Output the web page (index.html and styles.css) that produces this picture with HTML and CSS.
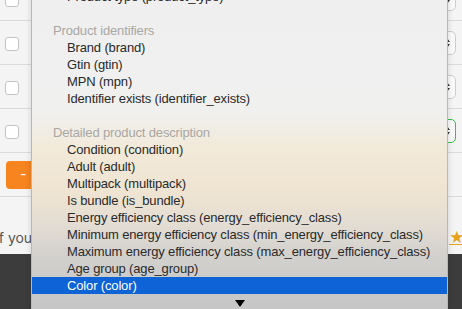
FILE: index.html
```html
<!DOCTYPE html>
<html lang="en">
<head>
  <meta charset="UTF-8">
  <meta name="viewport" content="width=device-width, initial-scale=1.0">
  <title>Feed attributes</title>
  <link rel="stylesheet" href="styles.css">
</head>
<body>
  <div class="page">
    <!-- Attribute mapping rows -->
    <div class="rows">
      <div class="row">
        <span class="check"></span>
        <span class="select"><span class="arrows"></span></span>
      </div>
      <div class="row">
        <span class="check"></span>
        <span class="select"><span class="arrows"></span></span>
      </div>
      <div class="row">
        <span class="check"></span>
        <span class="select"><span class="arrows"></span></span>
      </div>
      <div class="row">
        <span class="check"></span>
        <span class="select focused"><span class="arrows"></span></span>
      </div>
    </div>

    <div class="actions">
      <button class="btn-remove">- Delete</button>
    </div>

    <p class="note">
      <span class="note-text">If you like it</span>
      <a class="star" href="#">★&nbsp;</a>
    </p>

    <div class="footer"></div>
  </div>

  <!-- Open attribute dropdown -->
  <ul class="menu">
    <li class="item">Product type (product_type)</li>
    <li class="sep"></li>
    <li class="group">Product identifiers</li>
    <li class="item">Brand (brand)</li>
    <li class="item">Gtin (gtin)</li>
    <li class="item">MPN (mpn)</li>
    <li class="item">Identifier exists (identifier_exists)</li>
    <li class="sep"></li>
    <li class="group">Detailed product description</li>
    <li class="item">Condition (condition)</li>
    <li class="item">Adult (adult)</li>
    <li class="item">Multipack (multipack)</li>
    <li class="item">Is bundle (is_bundle)</li>
    <li class="item">Energy efficiency class (energy_efficiency_class)</li>
    <li class="item">Minimum energy efficiency class (min_energy_efficiency_class)</li>
    <li class="item">Maximum energy efficiency class (max_energy_efficiency_class)</li>
    <li class="item">Age group (age_group)</li>
    <li class="item active">Color (color)</li>
    <li class="scroll"><span class="down"></span></li>
  </ul>
</body>
</html>
```

FILE: styles.css
```css
body {
  margin: 0;
  overflow: hidden;
  font-family: Inter, "Noto Sans", sans-serif;
  background-color: #3b3b3b;
}
.page {
  display: flex;
  flex-direction: column;
  height: 309px;
  overflow: hidden;
  background-color: #f4f4f4;
}
.rows {
  margin-top: -23px;
}
.row {
  display: flex;
  align-items: center;
  justify-content: space-between;
  height: 43px;
  padding: 0 6px 0 5px;
  border-bottom: 1px solid #dadada;
}
.check {
  width: 14px;
  height: 14px;
  margin-top: 3px;
  box-sizing: border-box;
  border: 1px solid #c4c4c4;
  border-radius: 3px;
  background-color: #fff;
}
.select {
  display: flex;
  align-items: center;
  justify-content: flex-end;
  width: 180px;
  height: 24px;
  margin-top: 1px;
  padding-right: 5px;
  box-sizing: border-box;
  border: 1px solid #cdcdcd;
  border-radius: 5px;
  background-color: #fafafa;
}
.select.focused {
  border-color: #35c250;
}
.arrows {
  width: 0;
  height: 10px;
  border-left: 3px solid transparent;
  border-right: 3px solid transparent;
  position: relative;
}
.arrows::before,
.arrows::after {
  content: "";
  position: absolute;
  left: -3px;
  border-left: 3px solid transparent;
  border-right: 3px solid transparent;
}
.arrows::before {
  top: 0;
  border-bottom: 4px solid #333;
}
.arrows::after {
  bottom: 0;
  border-top: 4px solid #333;
}
.actions {
  display: flex;
  align-items: center;
  height: 43px;
  padding-left: 6px;
  border-bottom: 1px solid #dadada;
}
.btn-remove {
  height: 28px;
  padding: 0 14px;
  border: none;
  border-radius: 4px;
  background-color: #f6841f;
  color: #fff;
  font-family: inherit;
  font-size: 14px;
}
.note {
  display: flex;
  align-items: center;
  gap: 2px;
  height: 57px;
  margin: 0;
  padding-top: 24px;
  box-sizing: border-box;
  overflow: hidden;
  font-size: 14px;
  color: #555;
}
.note-text {
  flex: 0 0 452px;
  margin-left: -5px;
  white-space: nowrap;
}
.star {
  color: #e6a21b;
  font-size: 15px;
  white-space: nowrap;
}
.footer {
  flex: 1;
  background-color: #3c3c3c;
}

/* dropdown list */
.menu {
  position: absolute;
  top: -12px;
  left: 31px;
  width: 417px;
  margin: 0;
  padding: 0;
  list-style: none;
  box-sizing: border-box;
  border-left: 1px solid #b8b8b8;
  border-right: 1px solid #b8b8b8;
  box-shadow: 0 0 6px rgba(0, 0, 0, 0.15);
  background: linear-gradient(to bottom, #efefef 0px, #f0f0ef 125px, #f2e9d8 162px, #efe4d2 205px, #e4ddd3 235px, #d3d1ce 267px, #c6c6c6 315px);
  font-family: "Liberation Sans", Arial, sans-serif;
  font-size: 13px;
  letter-spacing: -0.15px;
  color: #2a2a2a;
}
.menu li {
  height: 17px;
  line-height: 17px;
  white-space: nowrap;
}
.item {
  padding-left: 35px;
}
.group {
  padding-left: 21px;
  color: #a9a7a4;
}
.item.active {
  background-color: #0e64d6;
  color: #fff;
}
.menu .scroll {
  display: flex;
  justify-content: center;
  align-items: center;
  height: 20px;
}
.down {
  width: 0;
  height: 0;
  margin-top: -2px;
  border-left: 5px solid transparent;
  border-right: 5px solid transparent;
  border-top: 7px solid #000;
}
```
